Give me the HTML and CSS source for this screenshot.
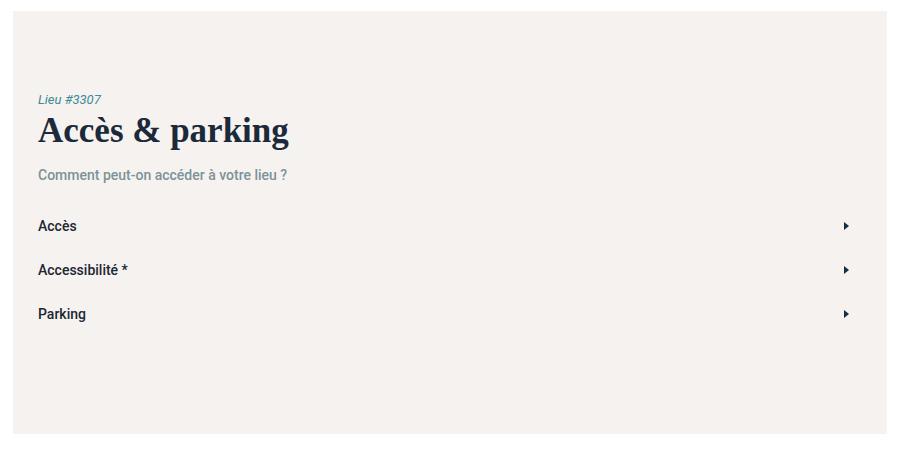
FILE: index.html
```html
<!DOCTYPE html>
<html lang="fr">
<head>
<meta charset="utf-8">
<link rel="stylesheet" href="styles.css">
</head>
<body>
<div class="page">
  <section class="panel">
    <p class="eyebrow">Lieu #3307</p>
    <h1 class="title">Accès &amp; parking</h1>
    <p class="subtitle">Comment peut-on accéder à votre lieu ?</p>
    <ul class="list">
      <li class="row"><span>Accès</span><span class="caret"></span></li>
      <li class="row"><span>Accessibilité *</span><span class="caret"></span></li>
      <li class="row"><span>Parking</span><span class="caret"></span></li>
    </ul>
  </section>
</div>
</body>
</html>
```
FILE: styles.css
```css
html, body { margin: 0; padding: 0; background: #ffffff; }
.page { padding: 11px 13px 16px 13px; }
.panel {
  background: #f6f2ef;
  height: 423px;
  box-sizing: border-box;
  padding: 81px 38px 0 25px;
  font-family: Roboto, "Liberation Sans", sans-serif;
}
.eyebrow {
  margin: 0;
  font-size: 13px;
  line-height: 16px;
  font-style: italic;
  color: #3d8a98;
}
.title {
  margin: 3px 0 0 0;
  font-family: "Liberation Serif", "DejaVu Serif", serif;
  font-weight: bold;
  font-size: 35px;
  line-height: 40px;
  color: #1b2a3a;
}
.subtitle {
  margin: 15px 0 0 0;
  font-size: 14px;
  line-height: 18px;
  font-weight: 500;
  color: #7b9399;
}
.list { list-style: none; margin: 20px 0 0 0; padding: 0; }
.row {
  height: 44px;
  display: flex;
  align-items: center;
  justify-content: space-between;
  font-size: 14px;
  font-weight: 500;
  color: #1c2733;
}
.caret {
  width: 0; height: 0;
  border-top: 4px solid transparent;
  border-bottom: 4px solid transparent;
  border-left: 5px solid #12303f;
}
```
